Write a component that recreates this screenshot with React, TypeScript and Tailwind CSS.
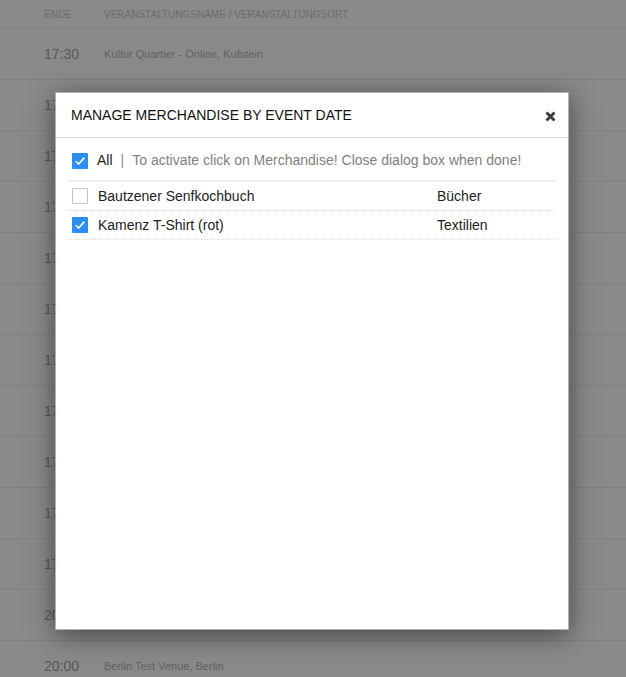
import React, { useState } from 'react';

const rows = [
  { time: '17:30', venue: 'Kultur Quartier - Online, Kufstein' },
  { time: '17:30', venue: 'Kultur Quartier - Online, Kufstein' },
  { time: '17:30', venue: 'Kultur Quartier - Online, Kufstein' },
  { time: '17:30', venue: 'Kultur Quartier - Online, Kufstein' },
  { time: '17:30', venue: 'Kultur Quartier - Online, Kufstein' },
  { time: '17:30', venue: 'Kultur Quartier - Online, Kufstein' },
  { time: '17:30', venue: 'Kultur Quartier - Online, Kufstein' },
  { time: '17:30', venue: 'Kultur Quartier - Online, Kufstein' },
  { time: '17:30', venue: 'Kultur Quartier - Online, Kufstein' },
  { time: '17:30', venue: 'Kultur Quartier - Online, Kufstein' },
  { time: '17:30', venue: 'Kultur Quartier - Online, Kufstein' },
  { time: '20:00', venue: 'Berlin Test Venue, Berlin' },
  { time: '20:00', venue: 'Berlin Test Venue, Berlin' },
];

const Checkbox: React.FC<{ checked: boolean; onChange: () => void }> = ({ checked, onChange }) => (
  <button
    onClick={onChange}
    className={
      checked
        ? 'w-4 h-4 shrink-0 bg-[#2a8ff0] rounded-[1px] flex items-center justify-center'
        : 'w-4 h-4 shrink-0 bg-white border border-[#c4c4c4] rounded-[1px]'
    }
  >
    {checked && (
      <svg width="12" height="12" viewBox="0 0 12 12">
        <path d="M1.8 6.2 L4.6 9 L10.4 2.6" fill="none" stroke="white" strokeWidth="1.6" />
      </svg>
    )}
  </button>
);

export default function App() {
  const [items, setItems] = useState([
    { name: 'Bautzener Senfkochbuch', category: 'Bücher', active: false },
    { name: 'Kamenz T-Shirt (rot)', category: 'Textilien', active: true },
  ]);
  const [all, setAll] = useState(true);

  const toggle = (i: number) =>
    setItems(items.map((it, idx) => (idx === i ? { ...it, active: !it.active } : it)));

  return (
    <div className="relative w-[626px] h-[677px] overflow-hidden bg-white font-['Liberation_Sans',Arial,sans-serif]">
      {/* Background table */}
      <div className="flex h-[29px] items-center border-b border-[#efefef] text-[10px] text-[#c8c8c8] uppercase">
        <div className="w-[60px] pl-[44px] shrink-0">Ende</div>
        <div className="pl-[44px]">Veranstaltungsname / Veranstaltungsort</div>
      </div>
      {rows.map((r, i) => (
        <div key={i} className="flex h-[51px] items-center border-b border-[#efefef]">
          <div className="w-[104px] pl-[44px] shrink-0 text-[14px] text-[#a4a4a4]">{r.time}</div>
          <div className="text-[11px] text-[#b4b4b4]">{r.venue}</div>
        </div>
      ))}

      {/* Overlay */}
      <div className="absolute inset-0 bg-black/[0.46]" />

      {/* Modal */}
      <div className="absolute left-[55px] top-[92px] w-[514px] h-[538px] bg-white border border-black/30 shadow-[0_5px_25px_rgba(0,0,0,0.5)] flex flex-col">
        <div className="h-[45px] flex items-center justify-between pl-[15px] pr-[12px] border-b border-[#e3e3e3]">
          <h4 className="text-[14px] text-[#111]">MANAGE MERCHANDISE BY EVENT DATE</h4>
          <svg width="11" height="11" viewBox="0 0 11 11" className="mt-[2px]">
            <path d="M1.5 1.5 L9.5 9.5 M9.5 1.5 L1.5 9.5" stroke="#3a3a3a" strokeWidth="2.8" />
          </svg>
        </div>
        <div className="px-[12px] pt-[10px]">
          <div className="flex items-center h-[34px] pb-[7px] pl-[4px] border-b-2 border-[#f0f0f0] text-[14px]">
            <Checkbox checked={all} onChange={() => setAll(!all)} />
            <span className="ml-[9px] text-[#222]">All</span>
            <span className="ml-[8px] text-[#8a8a8a]">|</span>
            <span className="ml-[8px] text-[#808080]">To activate click on Merchandise! Close dialog box when done!</span>
          </div>
          {items.map((it, i) => (
            <div key={i} className="flex items-center h-[29px] pl-[4px] border-b border-dotted border-[#dedede] text-[14px] text-[#222]">
              <Checkbox checked={it.active} onChange={() => toggle(i)} />
              <span className="ml-[10px] w-[339px]">{it.name}</span>
              <span>{it.category}</span>
            </div>
          ))}
        </div>
      </div>
    </div>
  );
}
